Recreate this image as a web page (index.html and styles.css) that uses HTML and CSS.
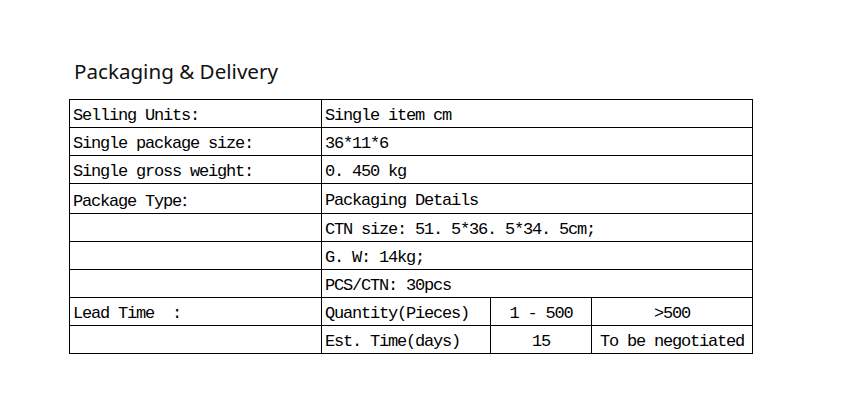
FILE: index.html
```html
<!DOCTYPE html>
<html>
<head>
<meta charset="utf-8">
<link rel="stylesheet" href="styles.css">
</head>
<body>
<div class="page">
  <h2 class="title">Packaging &amp; Delivery</h2>
  <table class="spec">
    <colgroup>
      <col class="c1"><col class="c2"><col class="c3"><col class="c4">
    </colgroup>
    <tr><td>Selling Units:</td><td colspan="3">Single item cm</td></tr>
    <tr><td>Single package size:</td><td colspan="3">36*11*6</td></tr>
    <tr><td>Single gross weight:</td><td colspan="3">0. 450 kg</td></tr>
    <tr><td>Package Type<span class="fw">：</span></td><td colspan="3">Packaging Details</td></tr>
    <tr><td></td><td colspan="3">CTN size: 51. 5*36. 5*34. 5cm;</td></tr>
    <tr><td></td><td colspan="3">G. W: 14kg;</td></tr>
    <tr><td></td><td colspan="3">PCS/CTN: 30pcs</td></tr>
    <tr><td>Lead Time  :</td><td>Quantity(Pieces)</td><td class="ctr">1 - 500</td><td class="ctr">&gt;500</td></tr>
    <tr><td></td><td>Est. Time(days)</td><td class="ctr">15</td><td class="ctr">To be negotiated</td></tr>
  </table>
</div>
</body>
</html>
```
FILE: styles.css
```css
html, body {
  margin: 0;
  padding: 0;
  background: #ffffff;
}
.page {
  padding: 57px 0 0 69px;
}
.title {
  margin: 0 0 14px 5px;
  font-family: "Noto Sans", "Open Sans", sans-serif;
  font-weight: 400;
  font-size: 20.6px;
  line-height: 28px;
  color: #111;
}
.spec {
  border-collapse: collapse;
  table-layout: fixed;
  width: 684px;
  font-family: "Liberation Mono", "Noto Sans CJK SC", monospace;
  font-size: 17px;
  letter-spacing: -1.2px;
  color: #000;
}
.c1 { width: 252px; }
.c2 { width: 169px; }
.c3 { width: 101px; }
.c4 { width: 161px; }
.spec td {
  border: 1px solid #000;
  height: 27px;
  padding: 4px 0 0 3px;
  box-sizing: border-box;
  white-space: pre;
  vertical-align: middle;
  line-height: 23px;
}
.spec td.ctr {
  text-align: center;
  padding: 4px 0 0 0;
}
.fw {
  font-family: "Noto Sans CJK SC", sans-serif;
  font-size: 15px;
  letter-spacing: 0;
}
```
